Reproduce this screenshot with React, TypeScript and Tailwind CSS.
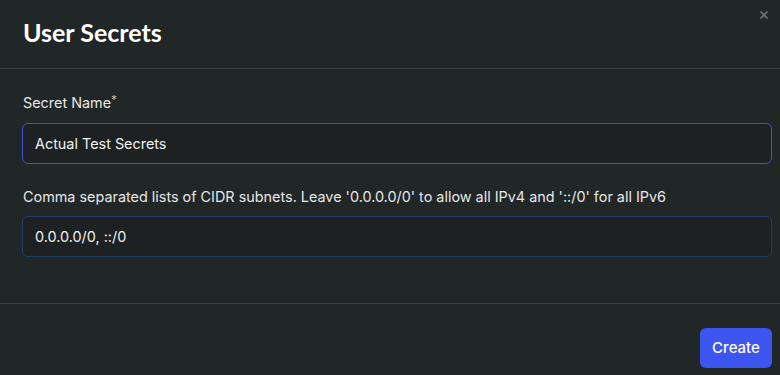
import { X } from 'lucide-react'

export default function App() {
  return (
    <div className="w-[780px] h-[375px] bg-[#212627] relative overflow-hidden" style={{ fontFamily: 'Inter, "Noto Sans", sans-serif' }}>
      {/* close */}
      <button className="absolute right-[10px] top-[9px] text-[#6f7576]" aria-label="Close">
        <X size={12} strokeWidth={3.5} />
      </button>

      <div className="h-[69px] border-b border-[#3b4041] px-[23px] pt-[16px]">
        <h1 className="text-[25px] font-bold text-white leading-[32px]" style={{ fontFamily: 'Lato, sans-serif' }}>
          User Secrets
        </h1>
      </div>

      <div className="h-[235px] border-b border-[#3b4041] pl-[22px] pr-[8px] pt-[24px]">
        <label className="block text-[14.4px] leading-[20px] text-[#e6e7e8] pl-px">
          Secret Name<span className="text-[#b8bcbd] align-top text-[12px] leading-[14px]">*</span>
        </label>
        <div className="mt-[10px] h-[41px] rounded-[6px] border border-[#3f54d9] bg-[#1d2122] px-[12px] flex items-center text-[14.4px] text-[#eef0f1]">
          Actual Test Secrets
        </div>

        <p className="mt-[23px] text-[14.4px] leading-[20px] text-[#e6e7e8] pl-px">
          Comma separated lists of CIDR subnets. Leave '0.0.0.0/0' to allow all IPv4 and '::/0' for all IPv6
        </p>
        <div className="mt-[9px] h-[41px] rounded-[6px] border border-[#213d66] bg-[#1d2122] px-[12px] flex items-center text-[14.4px] text-[#eef0f1]">
          0.0.0.0/0, ::/0
        </div>
      </div>

      <div className="flex justify-end px-[8px] pt-[24px]">
        <button className="h-[40px] w-[72px] rounded-[6px] bg-[#3d55ef] text-white text-[15px] font-medium">
          Create
        </button>
      </div>
    </div>
  )
}
